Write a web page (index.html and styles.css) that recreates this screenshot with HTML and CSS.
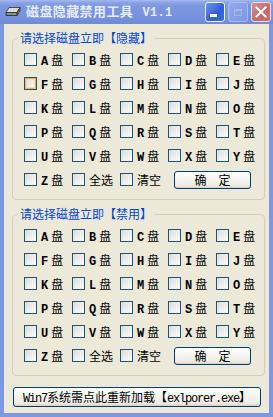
FILE: index.html
```html
<!DOCTYPE html>
<html lang="zh-CN">
<head>
<meta charset="utf-8">
<title>磁盘隐藏禁用工具 V1.1</title>
<link rel="stylesheet" href="styles.css">
</head>
<body>
<div class="win">
  <div class="titlebar">
    <svg class="ticon" width="16" height="12" viewBox="0 0 16 12">
      <polygon points="4,1.5 15,1.5 12,6.5 1,6.5" fill="#d9d9d9" stroke="#4a4a4a" stroke-width="1"/>
      <polygon points="1,6.5 12,6.5 12,9.5 1,9.5" fill="#8c8c8c" stroke="#3a3a3a" stroke-width="1"/>
      <polygon points="12,6.5 15,1.5 15,4.5 12,9.5" fill="#6e6e6e" stroke="#3a3a3a" stroke-width="1"/>
      <rect x="9" y="7.5" width="2" height="1" fill="#3fd23f"/>
    </svg>
    <div class="ttl">磁盘隐藏禁用工具 <span class="ver">V1.1</span></div>
    <div class="tbtns">
      <div class="tb tb-min"><span class="bar"></span></div>
      <div class="tb tb-max"><span class="sq"></span></div>
      <div class="tb tb-close">
        <svg width="12" height="12" viewBox="0 0 12 12"><path d="M1.5 1.5 L10.5 10.5 M10.5 1.5 L1.5 10.5" stroke="#fff" stroke-width="2" stroke-linecap="square"/></svg>
      </div>
    </div>
  </div>
  <div class="client">
    <fieldset class="grp">
      <legend>请选择磁盘立即【隐藏】</legend>
      <div class="grid">
        <label class="it"><span class="cb"></span><span class="lb"><b>A</b>盘</span></label>
        <label class="it"><span class="cb"></span><span class="lb"><b>B</b>盘</span></label>
        <label class="it"><span class="cb"></span><span class="lb"><b>C</b>盘</span></label>
        <label class="it"><span class="cb"></span><span class="lb"><b>D</b>盘</span></label>
        <label class="it"><span class="cb"></span><span class="lb"><b>E</b>盘</span></label>
        <label class="it"><span class="cb cb-hot"></span><span class="lb"><b>F</b>盘</span></label>
        <label class="it"><span class="cb"></span><span class="lb"><b>G</b>盘</span></label>
        <label class="it"><span class="cb"></span><span class="lb"><b>H</b>盘</span></label>
        <label class="it"><span class="cb"></span><span class="lb"><b>I</b>盘</span></label>
        <label class="it"><span class="cb"></span><span class="lb"><b>J</b>盘</span></label>
        <label class="it"><span class="cb"></span><span class="lb"><b>K</b>盘</span></label>
        <label class="it"><span class="cb"></span><span class="lb"><b>L</b>盘</span></label>
        <label class="it"><span class="cb"></span><span class="lb"><b>M</b>盘</span></label>
        <label class="it"><span class="cb"></span><span class="lb"><b>N</b>盘</span></label>
        <label class="it"><span class="cb"></span><span class="lb"><b>O</b>盘</span></label>
        <label class="it"><span class="cb"></span><span class="lb"><b>P</b>盘</span></label>
        <label class="it"><span class="cb"></span><span class="lb"><b>Q</b>盘</span></label>
        <label class="it"><span class="cb"></span><span class="lb"><b>R</b>盘</span></label>
        <label class="it"><span class="cb"></span><span class="lb"><b>S</b>盘</span></label>
        <label class="it"><span class="cb"></span><span class="lb"><b>T</b>盘</span></label>
        <label class="it"><span class="cb"></span><span class="lb"><b>U</b>盘</span></label>
        <label class="it"><span class="cb"></span><span class="lb"><b>V</b>盘</span></label>
        <label class="it"><span class="cb"></span><span class="lb"><b>W</b>盘</span></label>
        <label class="it"><span class="cb"></span><span class="lb"><b>X</b>盘</span></label>
        <label class="it"><span class="cb"></span><span class="lb"><b>Y</b>盘</span></label>
        <label class="it"><span class="cb"></span><span class="lb"><b>Z</b>盘</span></label>
        <label class="it"><span class="cb"></span><span class="lb">全选</span></label>
        <label class="it"><span class="cb"></span><span class="lb">清空</span></label>
        <button class="btn btn-ok" type="button">确　定</button>
      </div>
    </fieldset>
    <fieldset class="grp grp2">
      <legend>请选择磁盘立即【禁用】</legend>
      <div class="grid">
        <label class="it"><span class="cb"></span><span class="lb"><b>A</b>盘</span></label>
        <label class="it"><span class="cb"></span><span class="lb"><b>B</b>盘</span></label>
        <label class="it"><span class="cb"></span><span class="lb"><b>C</b>盘</span></label>
        <label class="it"><span class="cb"></span><span class="lb"><b>D</b>盘</span></label>
        <label class="it"><span class="cb"></span><span class="lb"><b>E</b>盘</span></label>
        <label class="it"><span class="cb"></span><span class="lb"><b>F</b>盘</span></label>
        <label class="it"><span class="cb"></span><span class="lb"><b>G</b>盘</span></label>
        <label class="it"><span class="cb"></span><span class="lb"><b>H</b>盘</span></label>
        <label class="it"><span class="cb"></span><span class="lb"><b>I</b>盘</span></label>
        <label class="it"><span class="cb"></span><span class="lb"><b>J</b>盘</span></label>
        <label class="it"><span class="cb"></span><span class="lb"><b>K</b>盘</span></label>
        <label class="it"><span class="cb"></span><span class="lb"><b>L</b>盘</span></label>
        <label class="it"><span class="cb"></span><span class="lb"><b>M</b>盘</span></label>
        <label class="it"><span class="cb"></span><span class="lb"><b>N</b>盘</span></label>
        <label class="it"><span class="cb"></span><span class="lb"><b>O</b>盘</span></label>
        <label class="it"><span class="cb"></span><span class="lb"><b>P</b>盘</span></label>
        <label class="it"><span class="cb"></span><span class="lb"><b>Q</b>盘</span></label>
        <label class="it"><span class="cb"></span><span class="lb"><b>R</b>盘</span></label>
        <label class="it"><span class="cb"></span><span class="lb"><b>S</b>盘</span></label>
        <label class="it"><span class="cb"></span><span class="lb"><b>T</b>盘</span></label>
        <label class="it"><span class="cb"></span><span class="lb"><b>U</b>盘</span></label>
        <label class="it"><span class="cb"></span><span class="lb"><b>V</b>盘</span></label>
        <label class="it"><span class="cb"></span><span class="lb"><b>W</b>盘</span></label>
        <label class="it"><span class="cb"></span><span class="lb"><b>X</b>盘</span></label>
        <label class="it"><span class="cb"></span><span class="lb"><b>Y</b>盘</span></label>
        <label class="it"><span class="cb"></span><span class="lb"><b>Z</b>盘</span></label>
        <label class="it"><span class="cb"></span><span class="lb">全选</span></label>
        <label class="it"><span class="cb"></span><span class="lb">清空</span></label>
        <button class="btn btn-ok" type="button">确　定</button>
      </div>
    </fieldset>
    <button class="btn btn-wide" type="button"><span class="mono">Win7</span>系统需点此重新加载【<span class="mono">exlporer.exe</span>】</button>
  </div>
</div>
</body>
</html>
```
FILE: styles.css
```css
html, body {
  margin: 0;
  padding: 0;
}
body {
  width: 273px;
  height: 417px;
  overflow: hidden;
  font-family: "Noto Sans CJK SC", sans-serif;
  font-size: 12px;
  background: #ece9d8;
}
.win {
  display: flex;
  flex-direction: column;
  height: 417px;
}
.titlebar {
  height: 24px;
  display: flex;
  align-items: center;
  padding: 0 2px 0 5px;
  background: linear-gradient(#a9bcf0 0, #8ea6e8 2px, #7b97e0 6px, #7893de 16px, #6f8bd8 24px);
}
.ticon {
  width: 16px;
  height: 12px;
  margin-right: 5px;
  flex: none;
}
.ttl {
  flex: 1;
  color: #e4ebfa;
  font-family: "Noto Sans CJK SC", sans-serif;
  font-weight: bold;
  font-size: 13px;
  line-height: 16px;
  letter-spacing: 0.4px;
  white-space: pre;
}
.ver {
  font-family: "Liberation Mono", monospace;
  font-size: 12px;
  letter-spacing: 0.3px;
  margin-left: 6px;
}
.tbtns {
  display: flex;
  gap: 3px;
}
.tb {
  width: 20px;
  height: 20px;
  box-sizing: border-box;
  border-radius: 3px;
  display: flex;
  align-items: center;
  justify-content: center;
  position: relative;
}
.tb-min {
  border: 1px solid #eef2fc;
  background: linear-gradient(135deg, #6d93ee, #2f5fd6 60%, #3f6fe0);
}
.tb-min .bar {
  position: absolute;
  left: 4px;
  bottom: 4px;
  width: 7px;
  height: 3px;
  background: #fff;
}
.tb-max {
  border: 1px solid #a9bbf0;
  background: linear-gradient(135deg, #93a9ea, #7d97e2);
}
.tb-max .sq {
  width: 8px;
  height: 7px;
  box-sizing: border-box;
  border: 1px solid #a4b6ec;
  border-top-width: 2px;
}
.tb-close {
  border: 1px solid #e6dce6;
  background: linear-gradient(135deg, #d99090, #c46868 60%, #c77272);
}
.client {
  flex: 1;
  display: flex;
  flex-direction: column;
  background: #ece9d8;
  border: 4px solid #7d98e0;
  border-top: 0;
  padding: 0 4px 0 8px;
}
.grp {
  margin: 8px 0 0;
  padding: 4px 0 7px 5px;
  border: 1px solid #d0d0bf;
  border-radius: 4px;
  min-width: 0;
}
.grp legend {
  padding: 0 2px;
  color: #0046d5;
  font-size: 12px;
  line-height: 12px;
}
.grid {
  margin-left: 6px;
  display: grid;
  grid-template-columns: repeat(5, 48px);
  grid-auto-rows: 24px;
}
.it {
  display: flex;
  align-items: flex-start;
  gap: 4px;
  padding-top: 5px;
  box-sizing: border-box;
  height: 24px;
}
.cb {
  flex: none;
  width: 13px;
  height: 13px;
  box-sizing: border-box;
  border: 1px solid #1c5180;
  background: linear-gradient(135deg, #dcdcd5, #f4f4f0 70%, #ffffff);
}
.cb-hot {
  box-shadow: inset 0 0 0 1px #f6b64c, inset 0 0 0 2px #fcdc9c;
}
.lb {
  line-height: 13px;
  color: #000;
  white-space: nowrap;
}
.lb b {
  font-family: "Liberation Mono", monospace;
  font-weight: bold;
  margin-right: 3px;
}
.btn {
  font-family: "Noto Sans CJK SC", sans-serif;
  font-size: 12px;
  color: #000;
  border: 1px solid #003c74;
  border-radius: 3px;
  background: linear-gradient(#ffffff, #f6f5f1 40%, #ecebe4 85%, #d6d0c5);
  padding: 0;
  box-sizing: border-box;
}
.btn-ok {
  grid-column: 4 / span 2;
  align-self: center;
  margin-left: 6px;
  width: 77px;
  height: 18px;
  line-height: 16px;
}
.grp2 {
  margin-top: 8px;
}
.btn-wide {
  margin: 11px 4px 0 1px;
  height: 20px;
  line-height: 18px;
  white-space: nowrap;
}
.mono {
  font-family: "Liberation Mono", monospace;
  letter-spacing: -1.2px;
}
```
